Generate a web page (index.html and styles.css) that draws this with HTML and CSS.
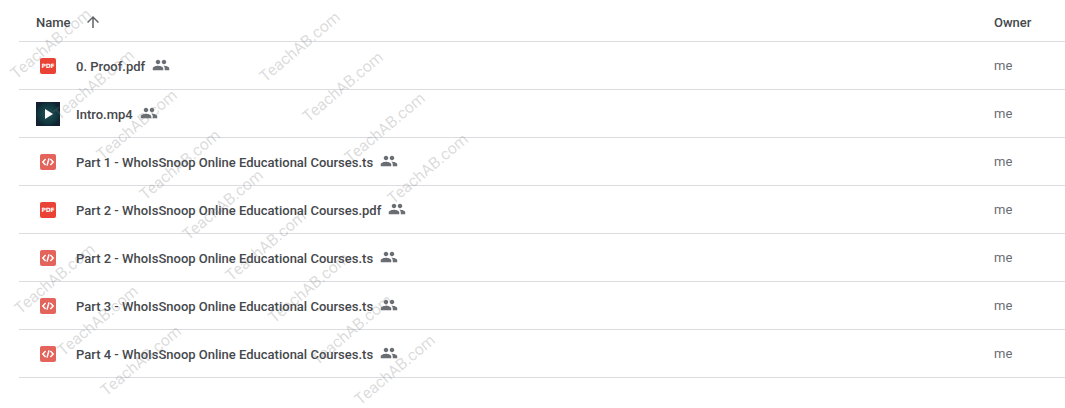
FILE: index.html
```html
<!DOCTYPE html>
<html lang="en">
<head>
  <meta charset="UTF-8" />
  <title>Files</title>
  <link rel="stylesheet" href="styles.css">
</head>
<body>

  <!-- === ICONS === -->
  <svg class="defs" width="0" height="0">
    <symbol id="people" viewBox="0 0 24 24">
      <path d="M16 11c1.66 0 2.99-1.34 2.99-3S17.66 5 16 5c-1.66 0-3 1.34-3 3s1.34 3 3 3zm-8 0c1.66 0 2.99-1.34 2.99-3S9.66 5 8 5C6.34 5 5 6.34 5 8s1.34 3 3 3zm0 2c-2.33 0-7 1.17-7 3.5V19h14v-2.5c0-2.33-4.67-3.5-7-3.5zm8 0c-.29 0-.62.02-.97.05 1.16.84 1.97 1.97 1.97 3.45V19h6v-2.5c0-2.33-4.67-3.5-7-3.5z"/>
    </symbol>
    <symbol id="code" viewBox="0 0 16 16">
      <rect width="16" height="16" rx="2" fill="#e4635a"/>
      <path d="M5.6 5 2.8 8l2.8 3M10.4 5l2.8 3-2.8 3M9 4.4 7 11.6" fill="none" stroke="#fff" stroke-width="1.5"/>
    </symbol>
  </svg>

  <div class="file-list">
    <div class="row head">
      <div class="name-cell">
        <span>Name</span>
        <svg class="arrow" viewBox="0 0 24 24"><path d="M4 12l1.41 1.41L11 7.83V20h2V7.83l5.58 5.59L20 12l-8-8-8 8z"/></svg>
      </div>
      <div class="owner">Owner</div>
    </div>

    <div class="row">
      <div class="name-cell">
        <div class="icon-box"><div class="pdf">PDF</div></div>
        <span class="file-name">0. Proof.pdf</span>
        <svg class="shared"><use href="#people"/></svg>
      </div>
      <div class="owner">me</div>
    </div>

    <div class="row">
      <div class="name-cell">
        <div class="icon-box"><div class="thumb"><div class="play"></div></div></div>
        <span class="file-name">Intro.mp4</span>
        <svg class="shared"><use href="#people"/></svg>
      </div>
      <div class="owner">me</div>
    </div>

    <div class="row">
      <div class="name-cell">
        <div class="icon-box"><svg class="code-icon"><use href="#code"/></svg></div>
        <span class="file-name">Part 1 - WhoIsSnoop Online Educational Courses.ts</span>
        <svg class="shared"><use href="#people"/></svg>
      </div>
      <div class="owner">me</div>
    </div>

    <div class="row">
      <div class="name-cell">
        <div class="icon-box"><div class="pdf">PDF</div></div>
        <span class="file-name">Part 2 - WhoIsSnoop Online Educational Courses.pdf</span>
        <svg class="shared"><use href="#people"/></svg>
      </div>
      <div class="owner">me</div>
    </div>

    <div class="row">
      <div class="name-cell">
        <div class="icon-box"><svg class="code-icon"><use href="#code"/></svg></div>
        <span class="file-name">Part 2 - WhoIsSnoop Online Educational Courses.ts</span>
        <svg class="shared"><use href="#people"/></svg>
      </div>
      <div class="owner">me</div>
    </div>

    <div class="row">
      <div class="name-cell">
        <div class="icon-box"><svg class="code-icon"><use href="#code"/></svg></div>
        <span class="file-name">Part 3 - WhoIsSnoop Online Educational Courses.ts</span>
        <svg class="shared"><use href="#people"/></svg>
      </div>
      <div class="owner">me</div>
    </div>

    <div class="row">
      <div class="name-cell">
        <div class="icon-box"><svg class="code-icon"><use href="#code"/></svg></div>
        <span class="file-name">Part 4 - WhoIsSnoop Online Educational Courses.ts</span>
        <svg class="shared"><use href="#people"/></svg>
      </div>
      <div class="owner">me</div>
    </div>
  </div>

  <!-- === WATERMARK === -->
  <div class="wm a1">TeachAB.com</div>
  <div class="wm a2">TeachAB.com</div>
  <div class="wm a3">TeachAB.com</div>
  <div class="wm a4">TeachAB.com</div>
  <div class="wm a5">TeachAB.com</div>
  <div class="wm a6">TeachAB.com</div>
  <div class="wm a7">TeachAB.com</div>
  <div class="wm a8">TeachAB.com</div>
  <div class="wm a9">TeachAB.com</div>
  <div class="wm b1">TeachAB.com</div>
  <div class="wm b2">TeachAB.com</div>
  <div class="wm b3">TeachAB.com</div>
  <div class="wm b4">TeachAB.com</div>
  <div class="wm c1">TeachAB.com</div>
  <div class="wm c2">TeachAB.com</div>
  <div class="wm c3">TeachAB.com</div>
</body>
</html>
```

FILE: styles.css
```css
* {
  margin: 0;
  padding: 0;
  box-sizing: border-box;
}

html, body {
  height: 100%;
  overflow: hidden;
}

body {
  background: white;
  color: #45484c;
  font-family: Roboto, sans-serif;
  font-size: 13px;
  position: relative;
}

.defs {
  position: absolute;
}

.file-list {
  padding-left: 19px;
}

.row {
  display: flex;
  align-items: center;
  height: 48px;
  border-bottom: 1px solid #dadce0;
}

.row.head {
  height: 42px;
  padding-top: 3px;
  font-weight: 500;
}

.name-cell {
  flex: 1;
  display: flex;
  align-items: center;
  padding-left: 17px;
}

.file-name {
  font-weight: 500;
  padding-top: 2px;
}

.owner {
  width: 71px;
}

.row .owner {
  color: #6a6e73;
}

.row.head .owner {
  color: #45484c;
}

.arrow {
  width: 18px;
  height: 18px;
  margin-left: 13px;
  fill: #5f6368;
}

.shared {
  width: 18px;
  height: 18px;
  margin-left: 7px;
  margin-bottom: 2px;
  fill: #6a6e73;
}

.icon-box {
  width: 24px;
  height: 24px;
  margin-right: 16px;
  display: flex;
  align-items: center;
  justify-content: center;
}

.pdf {
  width: 16px;
  height: 16px;
  border-radius: 2px;
  background: #ea4335;
  color: white;
  font-family: "DejaVu Sans", sans-serif;
  font-size: 6px;
  font-weight: 700;
  line-height: 16px;
  text-align: center;
  letter-spacing: -0.2px;
}

.code-icon {
  width: 16px;
  height: 16px;
}

.thumb {
  width: 24px;
  height: 24px;
  background: radial-gradient(circle at 50% 50%, #1f5558 0%, #10323a 62%, #0f2430 72%, #1a1b38 100%);
  display: flex;
  align-items: center;
  justify-content: center;
}

.play {
  width: 0;
  height: 0;
  margin-left: 2px;
  border-left: 8px solid white;
  border-top: 5.5px solid transparent;
  border-bottom: 5.5px solid transparent;
}

/* watermark, the left/top are the centre of each stamp */
.wm {
  position: absolute;
  width: 120px;
  height: 20px;
  margin: -10px 0 0 -60px;
  line-height: 20px;
  text-align: center;
  font-size: 16px;
  color: rgba(120, 120, 120, 0.27);
  transform: rotate(-40deg);
  pointer-events: none;
  white-space: nowrap;
}

.a1 { left: 51px; top: 44px; }
.a2 { left: 94px; top: 85px; }
.a3 { left: 137px; top: 125px; }
.a4 { left: 180px; top: 165px; }
.a5 { left: 223px; top: 205px; }
.a6 { left: 266px; top: 246px; }
.a7 { left: 309px; top: 288px; }
.a8 { left: 352px; top: 330px; }
.a9 { left: 395px; top: 370px; }
.b1 { left: 300px; top: 47px; }
.b2 { left: 343px; top: 87px; }
.b3 { left: 385px; top: 128px; }
.b4 { left: 428px; top: 169px; }
.c1 { left: 55px; top: 279px; }
.c2 { left: 98px; top: 321px; }
.c3 { left: 141px; top: 361px; }
```
